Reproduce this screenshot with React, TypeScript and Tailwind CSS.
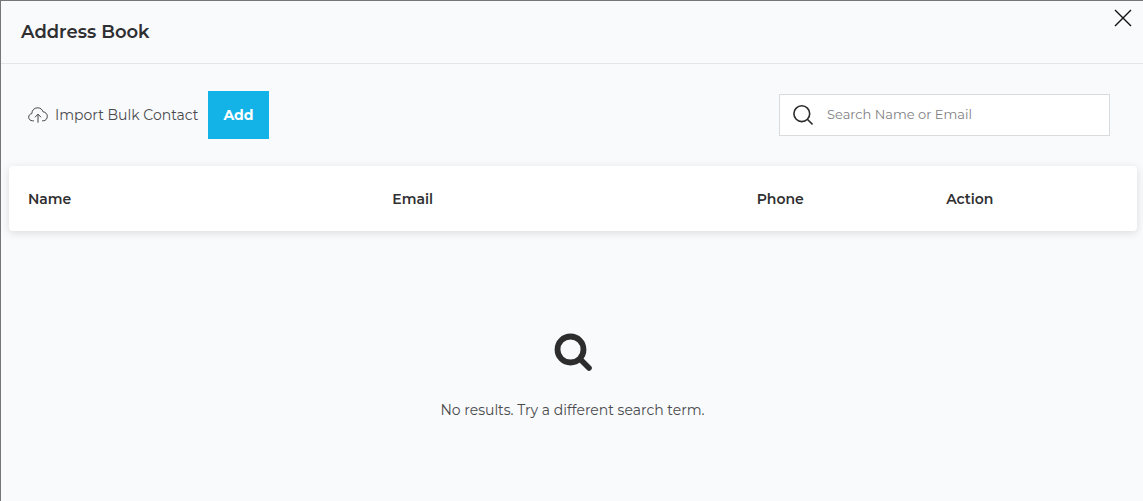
import React from "react";

function CloseIcon() {
  return (
    <svg width="18" height="18" viewBox="0 0 18 18" fill="none" stroke="#111" strokeWidth="1.4" aria-hidden="true">
      <path d="M1 1l16 16M17 1L1 17" />
    </svg>
  );
}

function CloudUploadIcon() {
  return (
    <svg width="20" height="16" viewBox="0 0 20 16" fill="none" stroke="#444" strokeWidth="1" strokeLinecap="round" strokeLinejoin="round" aria-hidden="true">
      <path d="M5.5 13.8H4.6C2.3 13.8.7 12.2.7 10.2c0-1.9 1.3-3.3 3.1-3.6C3.9 3.2 6.3.8 9.5.8c2.7 0 4.8 1.5 5.5 4 2.5.2 4.3 2.1 4.3 4.5 0 2.5-1.7 4.5-4 4.5H14.5" />
      <path d="M10 15.3V7.5M7.2 10L10 7.2 12.8 10" />
    </svg>
  );
}

function SearchIcon() {
  return (
    <svg width="20" height="20" viewBox="0 0 20 20" fill="none" stroke="#2b2b2b" strokeWidth="1.6" aria-hidden="true">
      <circle cx="8.8" cy="8.7" r="7.9" />
      <path d="M14.3 14.2l5.2 5.2" />
    </svg>
  );
}

function EmptySearchIcon() {
  return (
    <svg width="38" height="38" viewBox="0 0 38 38" fill="none" stroke="#2d2d2d" aria-hidden="true">
      <circle cx="16.5" cy="16.5" r="13" strokeWidth="5.8" />
      <path d="M26.5 26.5l8.5 8.5" strokeWidth="5.6" strokeLinecap="round" />
    </svg>
  );
}

export default function App() {
  return (
    <main className="flex min-h-screen flex-col border-l border-t border-[#77757a] bg-[#f9fafc] font-['Montserrat','Inter',sans-serif] text-[#2f2f31]">
      <header className="flex items-start justify-between border-b border-[#e3e5e8] pl-5 pr-[11px]">
        <h1 className="py-[17px] text-[18px] font-semibold leading-7">Address Book</h1>
        <button type="button" aria-label="Close" className="mt-2">
          <CloseIcon />
        </button>
      </header>

      <section className="flex items-center justify-between py-[27px] pl-[27px] pr-[33px]">
        <div className="flex items-center gap-[10px]">
          <button type="button" className="flex items-center gap-[7px] text-[14px] text-[#4a4a4d]">
            <CloudUploadIcon />
            Import Bulk Contact
          </button>
          <button type="button" className="h-12 bg-[#13b3e8] px-[15px] text-[14px] font-bold text-white">
            Add
          </button>
        </div>
        <label className="flex h-[42px] w-[331px] items-center gap-[14px] border border-[#d9dbdd] bg-white px-[13px]">
          <SearchIcon />
          <input
            type="search"
            aria-label="Search Name or Email"
            placeholder="Search Name or Email"
            className="min-w-0 flex-1 bg-transparent text-[13px] outline-none placeholder:text-[#7f8184]"
          />
        </label>
      </section>

      <div className="ml-2 mr-[6px] rounded bg-white shadow-[0_2px_8px_rgba(0,0,0,0.12)]">
        <table className="w-full table-fixed text-left text-[14px] leading-6">
          <thead>
            <tr>
              <th scope="col" className="w-[32.3%] pb-5 pl-[19px] pt-[21px] font-semibold">Name</th>
              <th scope="col" className="w-[32.3%] pb-5 pl-[19px] pt-[21px] font-semibold">Email</th>
              <th scope="col" className="w-[16.8%] pb-5 pl-[19px] pt-[21px] font-semibold">Phone</th>
              <th scope="col" className="pb-5 pl-[19px] pt-[21px] font-semibold">Action</th>
            </tr>
          </thead>
        </table>
      </div>

      <section className="flex flex-col items-center gap-[27px] pl-px pt-[102px]">
        <EmptySearchIcon />
        <p role="status" className="text-[14px] leading-6 text-[#4a4a4d]">No results. Try a different search term.</p>
      </section>
    </main>
  );
}
